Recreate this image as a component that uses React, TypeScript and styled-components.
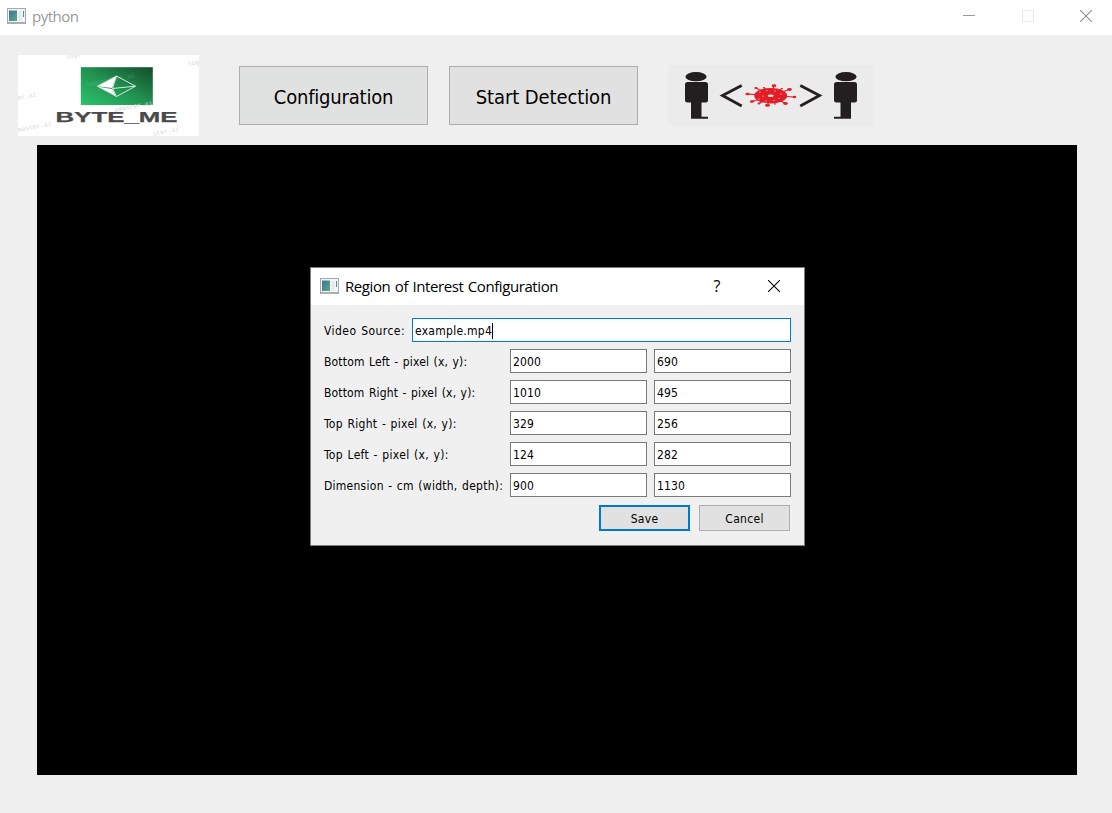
import React from "react";
import styled, { createGlobalStyle } from "styled-components";

const GlobalStyle = createGlobalStyle`
  * { box-sizing: border-box; }
  body { margin: 0; background: #efefef; overflow: hidden; }
`;

const uiFont = `"DejaVu Sans Condensed", "DejaVu Sans", Tahoma, sans-serif`;
const titleFont = `"Open Sans", "Noto Sans", sans-serif`;

const Window = styled.div`
  width: 1112px;
  height: 813px;
  display: flex;
  flex-direction: column;
  background: #efefef;
  font-family: ${uiFont};
  color: #000;
`;

const TitleBar = styled.header`
  height: 35px;
  flex: none;
  display: flex;
  align-items: center;
  padding: 0 20px 3px 7px;
  background: #fff;
`;

const Title = styled.span<{ $muted?: boolean; $spacing: number }>`
  flex: 1;
  margin-left: 6px;
  font: 15px/20px ${titleFont};
  letter-spacing: ${(p) => p.$spacing}px;
  word-spacing: 1px;
  color: ${(p) => (p.$muted ? "#999" : "#000")};
  white-space: nowrap;
`;

const Controls = styled.div`
  display: flex;
  gap: 46.5px;
`;

const Toolbar = styled.div`
  height: 110px;
  flex: none;
  display: flex;
  align-items: flex-start;
  padding: 20px 0 0 18px;
`;

const ToolButton = styled.button<{ $active?: boolean; $spacing: number }>`
  width: 189px;
  height: 59px;
  margin: 11px 21px 0 0;
  padding: 2px 0 0;
  border: 1px solid #adadad;
  background: ${(p) => (p.$active ? "#e0e2e1" : "#e1e1e1")};
  font: 20px ${uiFont};
  letter-spacing: ${(p) => p.$spacing}px;
  color: #000;
`;

const LogoSvg = styled.svg`
  display: block;
  margin-right: 40px;
`;

const DistanceSvg = styled.svg`
  display: block;
  margin: 10px 0 0 9px;
`;

const VideoArea = styled.main`
  width: 1040px;
  height: 630px;
  margin-left: 37px;
  position: relative;
  background: #000;
`;

const Dialog = styled.section`
  position: absolute;
  left: 273px;
  top: 122px;
  width: 495px;
  height: 279px;
  border: 1px solid #7c7c7c;
  background: #f0f0f0;
`;

const DialogBar = styled.div`
  height: 37px;
  display: flex;
  align-items: center;
  padding: 0 24px 2px 9px;
  background: #fff;
`;

const HelpMark = styled.span`
  width: 12px;
  margin-right: 45px;
  text-align: center;
  font: 16px/20px ${titleFont};
`;

const Form = styled.form`
  display: flex;
  flex-direction: column;
  gap: 7px;
  padding: 13px 13px 0;
`;

const Row = styled.div`
  height: 24px;
  display: flex;
  gap: 7px;
`;

const Label = styled.label<{ $width: number; $spacing: number }>`
  width: ${(p) => p.$width}px;
  flex: none;
  padding-top: 1px;
  font: 12px/25px ${uiFont};
  letter-spacing: ${(p) => p.$spacing}px;
  word-spacing: 0.8px;
  white-space: nowrap;
`;

const Field = styled.div<{ $focused?: boolean }>`
  flex: 1;
  display: flex;
  align-items: center;
  padding: 1px 2px 0;
  border: 1px solid ${(p) => (p.$focused ? "#0078d7" : "#7a7a7a")};
  background: #fff;
  font: 12px ${uiFont};
  letter-spacing: ${(p) => (p.$focused ? 0.27 : 0.1)}px;
`;

const Caret = styled.span`
  width: 1px;
  height: 16px;
  background: #000;
`;

const Actions = styled.div`
  display: flex;
  justify-content: flex-end;
  gap: 9px;
  margin-top: 1px;
  padding-right: 1px;
`;

const DialogButton = styled.button<{ $primary?: boolean }>`
  width: 91px;
  height: 26px;
  padding: 1px 0 0;
  border: ${(p) => (p.$primary ? "2px solid #0078d7" : "1px solid #adadad")};
  background: #e1e1e1;
  font: 12px ${uiFont};
  letter-spacing: 0.3px;
  color: #000;
`;

const AppIcon = () => (
  <svg width="19" height="16" viewBox="0 0 19 16">
    <defs>
      <linearGradient id="pane" x1="0" y1="0" x2="1" y2="1">
        <stop offset="0" stopColor="#3f72a0" />
        <stop offset="1" stopColor="#5bab78" />
      </linearGradient>
    </defs>
    <rect x="0.5" y="0.5" width="18" height="14.5" fill="#f4f5f6" stroke="#a3a9b0" />
    <path d="M0 15H19" stroke="#858b92" />
    <rect x="2" y="2.5" width="8" height="10.5" fill="url(#pane)" />
    <rect x="11.5" y="3" width="3" height="9.5" fill="#e6e8e9" />
    <rect x="16" y="3" width="1" height="6" fill="#5489a0" />
  </svg>
);

const CloseIcon = ({ color }: { color: string }) => (
  <svg width="12" height="12" viewBox="0 0 12 12">
    <path d="M0 0L12 12M12 0L0 12" stroke={color} strokeWidth="1.1" />
  </svg>
);

const watermarks = [
  { x: 48, y: 4, t: "logo" },
  { x: 170, y: 11, t: "log" },
  { x: 0, y: 45, t: "er.ai" },
  { x: 0, y: 77, t: "master.ai" },
  { x: 97, y: 57, t: "omaster.ai" },
  { x: 135, y: 81, t: "ster.ai" },
];

const Logo = () => (
  <LogoSvg width="181" height="81" viewBox="0 0 181 81">
    <defs>
      <linearGradient id="badge" x1="0" y1="1" x2="1" y2="0">
        <stop offset="0" stopColor="#2bc56c" />
        <stop offset="0.5" stopColor="#219150" />
        <stop offset="1" stopColor="#144d2b" />
      </linearGradient>
    </defs>
    <rect width="181" height="81" fill="#fff" />
    <rect x="62.8" y="12.2" width="72" height="37.8" fill="url(#badge)" />
    <g fill="#d8d8d8" fontFamily="Liberation Mono, monospace" fontSize="6.4">
      {watermarks.map((w) => (
        <text key={w.y} x={w.x} y={w.y} transform={`rotate(-11 ${w.x} ${w.y})`}>{w.t}</text>
      ))}
      <text x="68" y="31.5" transform="rotate(-11 68 31.5)" fill="#fff" opacity="0.16">logomaster.ai</text>
    </g>
    <path d="M98.5 21L79.5 31.2L94 33Z" fill="#fff" />
    <path d="M80 31.8L94 34L98 41Z" fill="#fff" />
    <path d="M98.5 21L117.5 31.2L98.5 41.5L79.5 31.2ZM98.5 21L94.5 33.5L98.5 41.5M94.5 33.5L117.5 31.2" fill="none" stroke="#d3ecdd" strokeWidth="1" />
    <text x="37.5" y="66.5" textLength="122" lengthAdjust="spacingAndGlyphs" fontFamily="Liberation Sans, sans-serif" fontWeight="700" fontSize="15" fill="#4a4a4a" stroke="#4a4a4a" strokeWidth="0.25">BYTE_ME</text>
  </LogoSvg>
);

const Person = ({ x, flip }: { x: number; flip?: boolean }) => (
  <g transform={`translate(${x} 0)${flip ? " scale(-1 1)" : ""}`} fill="#231f20">
    <ellipse cx="0" cy="11.7" rx="10.6" ry="4.6" />
    <rect x="-11" y="17" width="23" height="20.5" rx="2.5" />
    <path d="M-5 36H5.5V51.7H12V53.7H-5Z" />
  </g>
);

const spikes = [
  [88, 23, 1.7], [106, 20.7, 2.4], [121.5, 24.5, 2.4], [126.5, 32, 1.9], [117.5, 38.5, 2.4],
  [99.5, 40.3, 2.6], [84, 36.5, 2.2], [79.5, 29, 2.2], [96, 22.5, 1], [114, 23.5, 1], [107, 39, 1], [91, 38.5, 1.5],
];

const holes = [[92, 27], [99, 25.5], [107, 26], [113, 29], [95, 31], [111, 33.5], [91, 34], [98, 36], [106, 35.5]];

const Distance = () => (
  <DistanceSvg width="206" height="61" viewBox="0 0 206 61">
    <rect width="206" height="61" fill="#ebebeb" />
    <Person x={28} />
    <Person x={178} flip />
    <g fill="none" stroke="#231f20" strokeWidth="2.8">
      <path d="M73.7 20.5L54.5 30.6L73.7 41" />
      <path d="M132.3 20.5L151.5 30.6L132.3 41" />
    </g>
    <g fill="#e41e26" stroke="#e41e26">
      <ellipse cx="102.7" cy="30.7" rx="16.5" ry="7.8" stroke="none" />
      {spikes.map(([x, y, r]) => (
        <g key={`${x}-${y}`}>
          <path d={`M102.7 30.7L${x} ${y}`} strokeWidth="1.2" />
          <ellipse cx={x} cy={y} rx={r} ry={r * 0.6} stroke="none" />
        </g>
      ))}
    </g>
    <ellipse cx="102.7" cy="30.7" rx="3" ry="1.3" fill="#f6dcdc" />
    <g fill="#f0a0a2">
      {holes.map(([x, y]) => (
        <ellipse key={`${x}-${y}`} cx={x} cy={y} rx="1" ry="0.6" />
      ))}
    </g>
  </DistanceSvg>
);

const points = [
  { label: "Bottom Left - pixel (x, y):", x: "2000", y: "690", spacing: 0.17 },
  { label: "Bottom Right - pixel (x, y):", x: "1010", y: "495", spacing: 0.16 },
  { label: "Top Right - pixel (x, y):", x: "329", y: "256", spacing: 0.3 },
  { label: "Top Left - pixel (x, y):", x: "124", y: "282", spacing: 0.32 },
  { label: "Dimension - cm (width, depth):", x: "900", y: "1130", spacing: 0.26 },
];

export default function App() {
  return (
    <>
      <GlobalStyle />
      <Window>
        <TitleBar>
          <AppIcon />
          <Title $muted $spacing={-0.5}>python</Title>
          <Controls>
            <svg width="12" height="12"><path d="M0 5.5H12" stroke="#999" /></svg>
            <svg width="12" height="12"><rect x="0.5" y="0.5" width="11" height="11" fill="none" stroke="#ebebeb" /></svg>
            <CloseIcon color="#8f8f8f" />
          </Controls>
        </TitleBar>
        <Toolbar>
          <Logo />
          <ToolButton $active $spacing={-0.2}>Configuration</ToolButton>
          <ToolButton $spacing={-0.1}>Start Detection</ToolButton>
          <Distance />
        </Toolbar>
        <VideoArea>
          <Dialog>
            <DialogBar>
              <AppIcon />
              <Title $spacing={-0.42}>Region of Interest Configuration</Title>
              <HelpMark>?</HelpMark>
              <CloseIcon color="#000" />
            </DialogBar>
            <Form>
              <Row>
                <Label $width={81} $spacing={0.45}>Video Source:</Label>
                <Field $focused>example.mp4<Caret /></Field>
              </Row>
              {points.map((p) => (
                <Row key={p.label}>
                  <Label $width={179} $spacing={p.spacing}>{p.label}</Label>
                  <Field>{p.x}</Field>
                  <Field>{p.y}</Field>
                </Row>
              ))}
              <Actions>
                <DialogButton type="button" $primary>Save</DialogButton>
                <DialogButton type="button">Cancel</DialogButton>
              </Actions>
            </Form>
          </Dialog>
        </VideoArea>
      </Window>
    </>
  );
}
